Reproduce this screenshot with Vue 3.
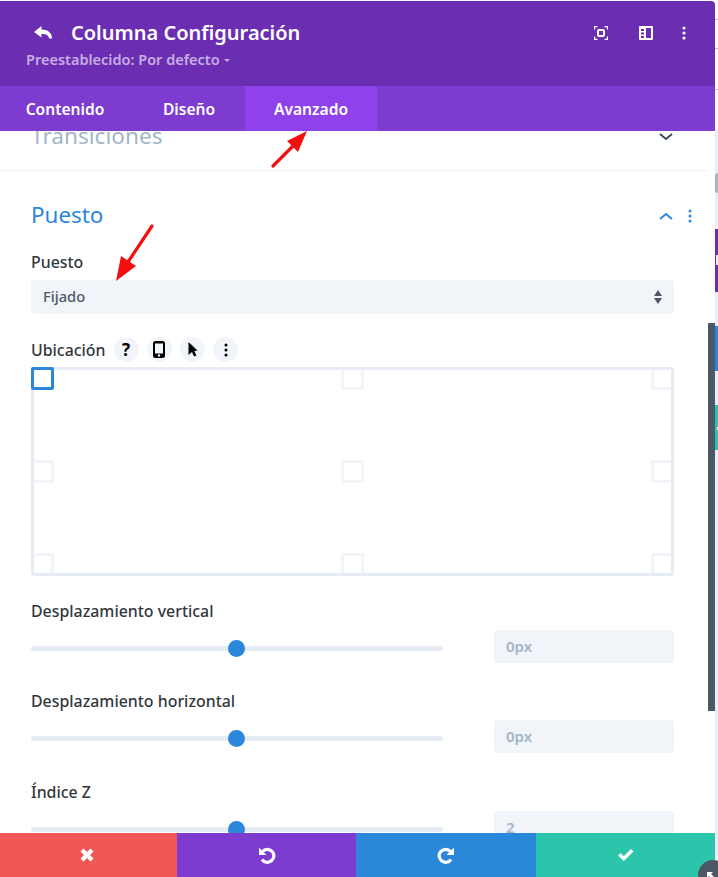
<script setup>
const xPath = 'M-6.5 -3.5 L-3.5 -6.5 L0 -3 L3.5 -6.5 L6.5 -3.5 L3 0 L6.5 3.5 L3.5 6.5 L0 3 L-3.5 6.5 L-6.5 3.5 L-3 0 Z'
const anchors = Array.from({ length: 9 }, (_, i) => i)
const sliders = [
  { label: 'Desplazamiento vertical', value: '0px' },
  { label: 'Desplazamiento horizontal', value: '0px' },
  { label: 'Índice Z', value: '2' },
]
</script>

<template>
  <div class="page">
    <div class="modal">
      <header class="head">
        <div class="title-row">
          <svg class="back" viewBox="0 0 20 16" width="20" height="16"><path d="M8.5 1 L1 7 L8.5 12.5 V9 C12.5 8.6 15 9.6 16.5 13.5 H19 C19 8 15 4.6 8.5 4.6 Z" fill="#fff"/></svg>
          <h1>Columna Configuración</h1>
          <div class="head-icons">
            <svg viewBox="0 0 14 14" width="14" height="14" fill="none" stroke="#fff" stroke-width="1.2"><path d="M.6 3.5V.6H3.5M10.5.6h2.9v2.9M13.4 10.5v2.9h-2.9M3.5 13.4H.6v-2.9"/><rect x="4" y="4" width="6" height="6" rx="1" stroke-width="2"/></svg>
            <svg viewBox="0 0 14 14" width="14" height="14"><path fill="#fff" fill-rule="evenodd" d="M0 1a1 1 0 0 1 1-1h12a1 1 0 0 1 1 1v12a1 1 0 0 1-1 1H1a1 1 0 0 1-1-1ZM7 2v10h5V2ZM2 3v2h3V3ZM2 6.500v2h3v-2ZM2 10v2h3v-2Z"/></svg>
            <svg viewBox="0 0 4 14" width="4" height="14" fill="#fff"><circle cx="2" cy="2" r="1.600"/><circle cx="2" cy="7" r="1.600"/><circle cx="2" cy="12" r="1.600"/></svg>
          </div>
        </div>
        <div class="preset">Preestablecido: Por defecto <span class="caret"></span></div>
      </header>
      <nav class="tabs">
        <span class="tab tab-a">Contenido</span>
        <span class="tab tab-b">Diseño</span>
        <span class="tab tab-c">Avanzado</span>
      </nav>

      <div class="body">
        <section class="collapsed">
          <span class="collapsed-title">Transiciones</span>
          <svg class="chev" viewBox="0 0 14 8" width="14" height="8" fill="none" stroke="#3d4a58" stroke-width="2"><path d="M1 1l6 5 6-5"/></svg>
        </section>

        <section class="open">
          <div class="section-head">
            <h2>Puesto</h2>
            <svg viewBox="0 0 14 8" width="14" height="8" fill="none" stroke="#2b87da" stroke-width="2"><path d="M1 7l6-5 6 5"/></svg>
            <svg class="dots" viewBox="0 0 4 14" width="4" height="14" fill="#2b87da"><circle cx="2" cy="2" r="1.500"/><circle cx="2" cy="7" r="1.500"/><circle cx="2" cy="12" r="1.500"/></svg>
          </div>

          <label class="lbl lbl-puesto">Puesto</label>
          <div class="select">
            <span>Fijado</span>
            <svg viewBox="0 0 8 14" width="8" height="14" fill="#4c5866"><path d="M4 0l4 6H0ZM4 14l4-6H0Z"/></svg>
          </div>

          <div class="ubic-row">
            <label class="lbl">Ubicación</label>
            <span class="pill"><b class="q">?</b></span>
            <span class="pill"><svg viewBox="0 0 12 17" width="12" height="17"><path fill-rule="evenodd" d="M2.500 0h7A2.500 2.500 0 0 1 12 2.500v12A2.500 2.500 0 0 1 9.500 17h-7A2.500 2.500 0 0 1 0 14.500v-12A2.500 2.500 0 0 1 2.500 0ZM2 2.500v10h8v-10ZM6 13.300a1.200 1.200 0 1 0 0 2.400 1.200 1.200 0 0 0 0-2.400Z"/></svg></span>
            <span class="pill"><svg viewBox="0 0 10 15" width="10" height="15"><path d="M.5 0l9 8.500L6.300 9l2 4.500-2.200 1L4 10l-3.500 3Z"/></svg></span>
            <span class="pill"><svg viewBox="0 0 4 14" width="4" height="14"><circle cx="2" cy="2" r="1.500"/><circle cx="2" cy="7" r="1.500"/><circle cx="2" cy="12" r="1.500"/></svg></span>
          </div>

          <div class="grid-box">
            <span v-for="a in anchors" :key="a" class="cell" :class="'cell-' + a"><i class="anchor" :class="{ on: a === 0 }"></i></span>
          </div>

          <div v-for="s in sliders" :key="s.label" class="field">
            <label class="lbl">{{ s.label }}</label>
            <div class="slider-row">
              <div class="track"><span class="knob"></span></div>
              <div class="num">{{ s.value }}</div>
            </div>
          </div>
        </section>
      </div>

      <footer class="foot">
        <span class="f f-red"><svg viewBox="-7 -7 14 14" width="14" height="14"><path :d="xPath" fill="#fff"/></svg></span>
        <span class="f f-purple"><svg viewBox="0 0 18 18" width="18" height="18" fill="none" stroke="#fff" stroke-width="3.200"><path d="M4.500 5.500A6.500 6.500 0 1 1 4 13.500"/><path d="M1 1.500v7.500H8.500Z" fill="#fff" stroke="none"/></svg></span>
        <span class="f f-blue"><svg viewBox="0 0 18 18" width="18" height="18" fill="none" stroke="#fff" stroke-width="3.200"><path d="M13.500 5.500A6.500 6.500 0 1 0 14 13.500"/><path d="M17 1.500V9H9.500Z" fill="#fff" stroke="none"/></svg></span>
        <span class="f f-green"><svg viewBox="0 0 16 12" width="16" height="12"><path d="M0 6.500L2.500 4l3.300 3.200L13 0l2.500 2.500-9.700 9.500Z" fill="#fff"/></svg></span>
      </footer>

      <svg class="arrow a1" viewBox="0 0 40 40" width="40" height="40"><path d="M2 37L24 15" stroke="#f40f0f" stroke-width="3.200" stroke-linecap="round"/><path d="M36 2L16 12 27 23Z" fill="#f40f0f"/></svg>
      <svg class="arrow a2" viewBox="0 0 40 60" width="40" height="60"><path d="M38 2L14 38" stroke="#f40f0f" stroke-width="3.200" stroke-linecap="round"/><path d="M2 57L7 32 22 42Z" fill="#f40f0f"/></svg>
      <div class="scrollbar"></div>
      <span class="resize"><svg viewBox="0 0 12 12" width="12" height="12"><path d="M1 1h6L5 3l6 6-2 2-6-6-2 2Z" fill="#fff"/></svg></span>
    </div>

    <aside class="strip">
      <i class="line l1"></i>
      <i class="line l2"></i>
      <i class="line l3"></i>
      <i class="s-knob"></i>
      <i class="s s-p"></i>
      <i class="s s-b"></i>
      <i class="s s-g"></i>
    </aside>
  </div>
</template>

<style>
html, body { margin: 0; overflow: hidden; background: #fff; }
</style>

<style scoped>
* { box-sizing: border-box; }
.page { width: 718px; height: 877px; display: flex; overflow: hidden; font-family: "Noto Sans", "Open Sans", sans-serif; color: #32373c; }
.modal { position: relative; width: 715px; height: 877px; padding-top: 1px; display: flex; flex-direction: column; background: #fff; }
.head { height: 85px; flex: none; background: #6b2eb3; border-top-right-radius: 4px; padding: 19px 0 0 33px; }
.title-row { display: flex; align-items: center; height: 26px; }
.back { margin-right: 18px; }
h1 { margin: 0; font-size: 20px; line-height: 26px; font-weight: 600; color: #fff; }
.head-icons { margin-left: auto; display: flex; align-items: center; margin-right: 29px; }
.head-icons svg:nth-child(2) { margin: 0 29px 0 31px; }
.preset { margin: 4px 0 0 -7px; font-size: 14.500px; line-height: 18px; font-weight: 600; color: #c6aee3; }
.caret { display: inline-block; margin: 0 0 2px 1px; border: 3px solid transparent; border-top-color: #c6aee3; border-bottom: 0; vertical-align: middle; }
.tabs { height: 45px; flex: none; background: #7e3bd0; display: flex; }
.tab { height: 45px; display: flex; align-items: center; justify-content: center; color: #fff; font-size: 15.600px; font-weight: 600; }
.tab-a { width: 130px; }
.tab-b { width: 115px; padding-left: 3px; }
.tab-c { width: 132px; background: #8f42ec; }
.body { flex: 1; min-height: 0; overflow: hidden; }
.collapsed { height: 50px; margin-top: -10px; border-bottom: 1px solid #f1f1f1; display: flex; padding: 0 34px 0 31px; justify-content: space-between; align-items: flex-start; margin-right: 7px; }
.collapsed-title { font-size: 22.600px; line-height: 30px; color: #a3b5c9; }
.chev { margin-top: 12px; margin-right: 1px; }
.open { padding: 0 41px 0 31px; }
.section-head { height: 30px; margin-top: 29px; display: flex; align-items: center; }
h2 { margin: 0; font-size: 22.400px; line-height: 30px; font-weight: 400; color: #2b87da; flex: 1; }
.section-head svg { margin-top: 1px; }
.dots { margin-left: 15px; margin-right: -18px; }
.lbl { display: block; font-size: 15.900px; line-height: 20px; font-weight: 500; color: #32373c; }
.lbl-puesto { margin-top: 22px; }
.select { margin-top: 8px; height: 34px; background: #f1f4f9; border-radius: 3px; display: flex; align-items: center; justify-content: space-between; padding: 0 12px 2px 12px; font-size: 14.700px; font-weight: 500; color: #4c5866; }
.select svg { margin-top: 2px; }
.ubic-row { margin-top: 23px; height: 25px; display: flex; align-items: center; }
.ubic-row .lbl { margin-right: 8px; }
.pill { width: 25px; height: 25px; margin-right: 8.300px; border-radius: 50%; background: #f1f4f9; display: flex; align-items: center; justify-content: center; color: #000; }
.q { font-size: 17px; font-weight: 700; }
.grid-box { margin-top: 5px; height: 209px; border: 3px solid #e7ecf4; border-radius: 3px; display: grid; grid-template-columns: 1fr 1fr 1fr; grid-template-rows: 1fr 1fr 1fr; }
.cell { display: flex; }
.cell-1, .cell-4, .cell-7 { justify-content: center; }
.cell-2, .cell-5, .cell-8 { justify-content: flex-end; }
.cell-3, .cell-4, .cell-5 { align-items: center; }
.cell-6, .cell-7, .cell-8 { align-items: flex-end; }
.anchor { display: block; width: 20px; height: 20px; border: 3px solid #f1f4f9; border-radius: 2px; }
.cell-3 .anchor, .cell-4 .anchor, .cell-5 .anchor { height: 23px; }
.cell-1 .anchor, .cell-4 .anchor, .cell-7 .anchor { width: 23px; }
.cell-0 .anchor, .cell-1 .anchor, .cell-2 .anchor { border-top: 0; }
.cell-6 .anchor, .cell-7 .anchor, .cell-8 .anchor { border-bottom: 0; }
.cell-0 .anchor, .cell-3 .anchor, .cell-6 .anchor { border-left: 0; }
.cell-2 .anchor, .cell-5 .anchor, .cell-8 .anchor { border-right: 0; }
.cell-0 .anchor.on { width: 23px; height: 23px; margin: -3px 0 0 -3px; border: 3px solid #2b87da; border-radius: 2px; background: #fff; }
.grid-box + .field { margin-top: 25px; }
.field { height: 90.400px; }
.slider-row { display: flex; align-items: center; justify-content: space-between; margin-top: 9px; }
.track { position: relative; width: 412px; height: 5px; border-radius: 3px; background: #e7ecf4; margin-top: 4px; }
.knob { position: absolute; left: 197px; top: -6px; width: 17px; height: 17px; border-radius: 50%; background: #2b87da; }
.num { width: 180px; height: 33px; padding-left: 12px; border-radius: 3px; background: #f1f4f9; font-size: 15px; font-weight: 600; line-height: 33px; color: #a3b5c9; }
.foot { height: 44px; flex: none; display: flex; position: relative; }
.f { display: flex; align-items: center; justify-content: center; height: 44px; }
.f-red { width: 177px; padding-right: 4px; background: #f25757; }
.f-purple { width: 179px; background: #7e3bd0; }
.f-blue { width: 180px; background: #2b87da; }
.f-green { width: 179px; background: #2bc5ab; }
.arrow { position: absolute; }
.a1 { left: 271px; top: 129px; }
.a2 { left: 114px; top: 224px; }
.scrollbar { position: absolute; left: 708px; top: 323px; width: 7px; height: 388px; background: #4c5866; }
.resize { position: absolute; z-index: 1; left: 698px; top: 860px; width: 30px; height: 30px; border-radius: 50%; background: #4c5866; padding: 6px 0 0 8px; display: block; }
.strip { position: relative; width: 3px; height: 877px; background: linear-gradient(#fff 130px, #e9eff7 130px); }
.line { position: absolute; left: 0; width: 3px; height: 1px; background: #bdbdbd; }
.l1 { top: 19px; }
.l2 { top: 48px; }
.l3 { top: 89px; }
.s-knob { position: absolute; left: 0; top: 173px; width: 3px; height: 20px; border-radius: 3px 0 0 3px; background: #a9b4bf; }
.s { position: absolute; left: 0; width: 3px; }
.s-p { top: 229px; height: 63px; background: #6b2eb3; }
.s-p::after { content: ""; position: absolute; left: 1px; top: 26px; width: 2px; height: 10px; background: #e9eff7; }
.s-b { top: 326px; height: 45px; background: #2b87da; }
.s-g { top: 405px; height: 45px; background: #2bc5ab; }
.s-g::after { content: ""; position: absolute; left: 2px; top: 22px; width: 1px; height: 3px; background: #fff; }
</style>
